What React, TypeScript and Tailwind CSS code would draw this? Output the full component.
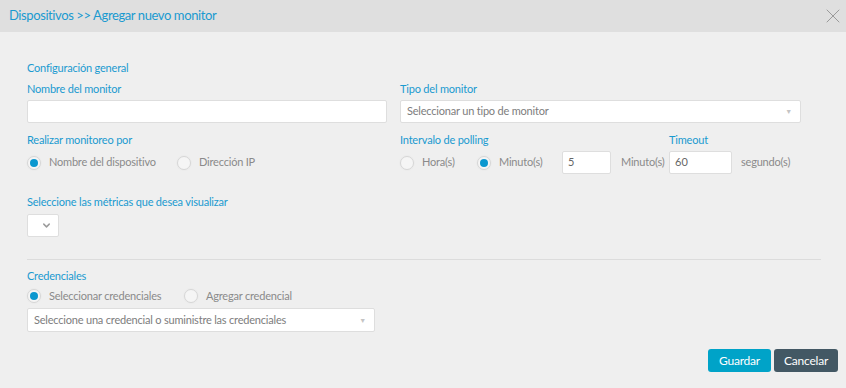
import { X, ChevronDown } from 'lucide-react'

function Radio({ checked, label, w }: { checked?: boolean; label: string; w?: string }) {
  return (
    <label className={`${w ?? ''} flex items-center gap-[8px] text-[11px] tracking-[-0.2px] text-[#8a8a8a]`}>
      <span className="w-[14px] h-[14px] shrink-0 rounded-full border border-[#d6d6d6] bg-[#f5f5f5] shadow-[0_0_0_1px_#ececec] flex items-center justify-center">
        {checked && <span className="w-[8px] h-[8px] rounded-full bg-[#0b97cf]" />}
      </span>
      {label}
    </label>
  )
}

function Label({ children, className }: { children: React.ReactNode; className?: string }) {
  return (
    <div className={`text-[11px] tracking-[-0.2px] text-[#1a9ad0] leading-[16px] mb-[3px] ${className ?? ''}`}>
      {children}
    </div>
  )
}

function Select({ text, w, h }: { text: string; w: string; h: string }) {
  return (
    <div className={`${w} ${h} bg-white border border-[#dedede] rounded-[2px] flex items-center justify-between pl-[6px] pr-[8px] text-[11px] tracking-[-0.2px] text-[#7d7d7d]`}>
      <span>{text}</span>
      <span className="text-[#c4c4c4] text-[7px]">▼</span>
    </div>
  )
}

export default function App() {
  return (
    <div className="w-[846px] h-[388px] bg-[#efefef] flex flex-col" style={{ fontFamily: 'Lato, sans-serif' }}>
      <div className="h-[32px] bg-[#dfdfdf] flex items-center justify-between pl-[9px] pr-[1px]">
        <span className="text-[13px] tracking-[-0.4px] text-[#1a9ad0]">Dispositivos &gt;&gt; Agregar nuevo monitor</span>
        <X size={24} strokeWidth={1} className="text-[#9a9a9a]" />
      </div>
      <div className="flex-1 pl-[27px] pr-[25px] pt-[28px] flex flex-col">
        <Label>Configuración general</Label>
        <div className="grid grid-cols-[360px_401px] gap-x-[13px] mt-[2px]">
          <div>
            <Label>Nombre del monitor</Label>
            <div className="h-[23px] bg-white border border-[#dedede] rounded-[2px]" />
          </div>
          <div>
            <Label>Tipo del monitor</Label>
            <Select text="Seleccionar un tipo de monitor" w="w-[401px]" h="h-[23px]" />
          </div>
          <div className="mt-[9px]">
            <Label>Realizar monitoreo por</Label>
            <div className="flex items-center h-[23px]">
              <Radio checked label="Nombre del dispositivo" w="w-[150px]" />
              <Radio label="Dirección IP" />
            </div>
          </div>
          <div className="mt-[9px] flex">
            <div className="w-[269px]">
              <Label>Intervalo de polling</Label>
              <div className="flex items-center h-[23px]">
                <Radio label="Hora(s)" w="w-[77px]" />
                <Radio checked label="Minuto(s)" w="w-[85px]" />
                <div className="w-[49px] h-[23px] bg-white border border-[#dedede] rounded-[2px] text-[11px] text-[#666] flex items-center pl-[5px]">5</div>
                <span className="ml-[10px] text-[11px] tracking-[-0.2px] text-[#8a8a8a]">Minuto(s)</span>
              </div>
            </div>
            <div>
              <Label>Timeout</Label>
              <div className="flex items-center h-[23px]">
                <div className="w-[63px] h-[23px] bg-white border border-[#dedede] rounded-[2px] text-[11px] text-[#666] flex items-center pl-[5px]">60</div>
                <span className="ml-[9px] text-[11px] tracking-[-0.2px] text-[#8a8a8a]">segundo(s)</span>
              </div>
            </div>
          </div>
        </div>
        <div className="mt-[20px]">
          <Label className="mb-[4px]">Seleccione las métricas que desea visualizar</Label>
          <div className="w-[32px] h-[23px] bg-white border border-[#dedede] rounded-[2px] flex items-center justify-end pr-[6px]">
            <ChevronDown size={11} strokeWidth={3.2} className="text-[#9c9c9c]" />
          </div>
        </div>
        <div className="mt-[22px] border-t border-[#dcdcdc] w-[794px]" />
        <div className="mt-[8px]">
          <Label>Credenciales</Label>
          <div className="flex items-center h-[18px]">
            <Radio checked label="Seleccionar credenciales" w="w-[157px]" />
            <Radio label="Agregar credencial" />
          </div>
          <div className="mt-[3px]">
            <Select text="Seleccione una credencial o suministre las credenciales" w="w-[348px]" h="h-[24px]" />
          </div>
        </div>
        <div className="mt-[17px] flex justify-end gap-[3px] -mr-[17px]">
          <button className="w-[63px] h-[23px] bg-[#00a3c8] text-white text-[12px] tracking-[-0.2px] rounded-[3px]">Guardar</button>
          <button className="w-[64px] h-[23px] bg-[#435864] text-white text-[12px] tracking-[-0.2px] rounded-[3px]">Cancelar</button>
        </div>
      </div>
    </div>
  )
}
